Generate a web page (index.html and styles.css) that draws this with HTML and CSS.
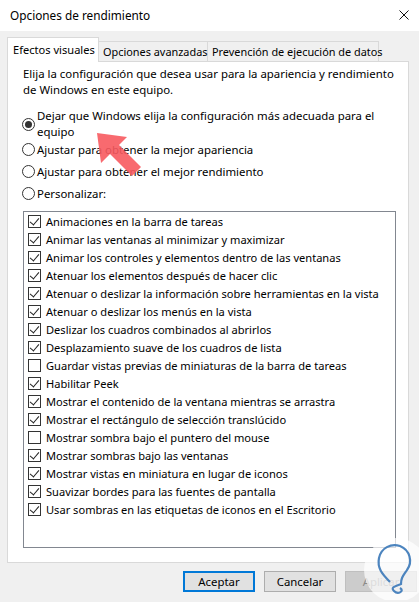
FILE: index.html
```html
<!DOCTYPE html>
<html lang="es">
<head>
    <meta charset="UTF-8">
    <link rel="stylesheet" href="styles.css">
    <title>Opciones de rendimiento</title>
</head>
<body>
    <div class="titlebar">
        <span class="title">Opciones de rendimiento</span>
        <svg class="close" width="10" height="10" viewBox="0 0 10 10"><path d="M0.5 0.5 L9.5 9.5 M9.5 0.5 L0.5 9.5" stroke="#111" stroke-width="1"/></svg>
    </div>

    <div class="content">
        <div class="tabs">
            <div class="tab selected">Efectos visuales</div>
            <div class="tab">Opciones avanzadas</div>
            <div class="tab">Prevención de ejecución de datos</div>
        </div>

        <div class="panel">
            <p class="intro">Elija la configuración que desea usar para la apariencia y rendimiento de Windows en este equipo.</p>

            <div class="radio first"><span class="dot on"></span><span>Dejar que Windows elija la configuración más adecuada para el equipo</span></div>
            <div class="radio"><span class="dot"></span><span>Ajustar para obtener la mejor apariencia</span></div>
            <div class="radio"><span class="dot"></span><span>Ajustar para obtener el mejor rendimiento</span></div>
            <div class="radio"><span class="dot"></span><span>Personalizar:</span></div>

            <div class="listbox">
                <div class="item"><span class="box on"></span>Animaciones en la barra de tareas</div>
                <div class="item"><span class="box on"></span>Animar las ventanas al minimizar y maximizar</div>
                <div class="item"><span class="box on"></span>Animar los controles y elementos dentro de las ventanas</div>
                <div class="item"><span class="box on"></span>Atenuar los elementos después de hacer clic</div>
                <div class="item"><span class="box on"></span>Atenuar o deslizar la información sobre herramientas en la vista</div>
                <div class="item"><span class="box on"></span>Atenuar o deslizar los menús en la vista</div>
                <div class="item"><span class="box on"></span>Deslizar los cuadros combinados al abrirlos</div>
                <div class="item"><span class="box on"></span>Desplazamiento suave de los cuadros de lista</div>
                <div class="item"><span class="box"></span>Guardar vistas previas de miniaturas de la barra de tareas</div>
                <div class="item"><span class="box on"></span>Habilitar Peek</div>
                <div class="item"><span class="box on"></span>Mostrar el contenido de la ventana mientras se arrastra</div>
                <div class="item"><span class="box on"></span>Mostrar el rectángulo de selección translúcido</div>
                <div class="item"><span class="box"></span>Mostrar sombra bajo el puntero del mouse</div>
                <div class="item"><span class="box on"></span>Mostrar sombras bajo las ventanas</div>
                <div class="item"><span class="box on"></span>Mostrar vistas en miniatura en lugar de iconos</div>
                <div class="item"><span class="box on"></span>Suavizar bordes para las fuentes de pantalla</div>
                <div class="item"><span class="box on"></span>Usar sombras en las etiquetas de iconos en el Escritorio</div>
            </div>
        </div>

        <div class="buttons">
            <button class="btn default">Aceptar</button>
            <button class="btn">Cancelar</button>
            <button class="btn disabled">Aplicar</button>
        </div>
    </div>

    <!-- flecha roja sobre la captura -->
    <svg class="arrow" width="60" height="60" viewBox="0 0 60 60">
        <path d="M2 2 L32 6 L24 14 L46 36 L37 45 L15 23 L6 32 Z" fill="#f75a5f" opacity="0.9"/>
    </svg>

    <!-- marca de agua -->
    <svg class="logo" width="70" height="62" viewBox="0 0 70 62">
        <circle cx="36" cy="32" r="32" fill="#ffffff" opacity="0.7"/>
        <path d="M30 44 C22 36 17 30 19 20 C21 10 31 5 40 8 C50 12 53 24 47 32 C43 38 41 40 41 46 C36 48 30 49 34 53 C38 57 45 53 40 50" fill="none" stroke="#3a78b8" stroke-width="2.2" opacity="0.9"/>
    </svg>
</body>
</html>
```

FILE: styles.css
```css
html
{
    background-color: #f0f0f0;
}

body
{
    margin: 0;
    width: 419px;
    height: 602px;
    font-family: "Noto Sans", "Open Sans", sans-serif;
    font-size: 11.1px;
    color: #000;
    overflow: hidden;
    position: relative;
}

.titlebar
{
    height: 31px;
    background-color: #fff;
    display: flex;
    align-items: center;
    justify-content: space-between;
    padding: 0 10px 2px 10px;
    box-sizing: border-box;
}

.title
{
    font-size: 11.8px;
}

.content
{
    padding: 6px 10px 0 7px;
}

.tabs
{
    display: flex;
    align-items: flex-end;
    height: 24px;
    position: relative;
    z-index: 1;
}

.tab
{
    height: 20px;
    line-height: 19px;
    padding: 0 4px;
    border: 1px solid #d9d9d9;
    border-bottom: none;
    box-sizing: border-box;
    background-color: #f0f0f0;
    white-space: nowrap;
    font-size: 10.9px;
}

.tab + .tab
{
    border-left: none;
}

.tab.selected
{
    height: 25px;
    margin-bottom: -1px;
    background-color: #fff;
    padding: 0 5px;
    line-height: 24px;
    width: 92px;
    font-size: 11.1px;
}

.tab:nth-child(2)
{
    width: 109px;
}

.tab:nth-child(3)
{
    width: 171px;
}

.panel
{
    width: 402px;
    height: 502px;
    box-sizing: border-box;
    background-color: #fff;
    border: 1px solid #d9d9d9;
    padding: 4px 13px 0 15px;
}

.intro
{
    margin: 0 0 10px 0;
    line-height: 16px;
    font-size: 11.4px;
}

.radio
{
    display: flex;
    align-items: flex-start;
    line-height: 16px;
    margin-bottom: 6px;
    font-size: 11.4px;
}

.radio.first
{
    align-items: center;
    margin-bottom: 2px;
}

.dot
{
    flex: none;
    width: 13px;
    height: 13px;
    border: 1px solid #333;
    border-radius: 50%;
    box-sizing: border-box;
    margin: 1px 2px 0 -1px;
    position: relative;
}

.dot.on::after
{
    content: "";
    position: absolute;
    left: 2px;
    top: 2px;
    width: 7px;
    height: 7px;
    border-radius: 50%;
    background-color: #333;
}

.listbox
{
    margin-top: 9px;
    width: 373px;
    height: 337px;
    box-sizing: border-box;
    border: 1px solid #828790;
    padding: 0 0 0 4px;
}

.item
{
    height: 18px;
    display: flex;
    align-items: center;
    white-space: nowrap;
}

.box
{
    flex: none;
    width: 13px;
    height: 13px;
    border: 1px solid #333;
    box-sizing: border-box;
    margin-right: 5px;
    position: relative;
}

.box.on::after
{
    content: "";
    position: absolute;
    left: 3px;
    top: 0px;
    width: 4px;
    height: 8px;
    border-right: 1.2px solid #222;
    border-bottom: 1.2px solid #222;
    transform: rotate(40deg);
}

.buttons
{
    display: flex;
    justify-content: flex-end;
    gap: 9px;
    padding: 8px 0 0 0;
    margin-right: -8px;
}

.btn
{
    width: 72px;
    height: 21px;
    font-family: inherit;
    font-size: 11.4px;
    background-color: #e1e1e1;
    border: 1px solid #adadad;
    padding: 0;
    color: #000;
}

.btn.default
{
    border: 2px solid #0078d7;
}

.btn.disabled
{
    background-color: #cccccc;
    border-color: #bfbfbf;
    color: #8a8a8a;
}

.arrow
{
    position: absolute;
    left: 95px;
    top: 131px;
}

.logo
{
    position: absolute;
    left: 360px;
    top: 538px;
}
```
